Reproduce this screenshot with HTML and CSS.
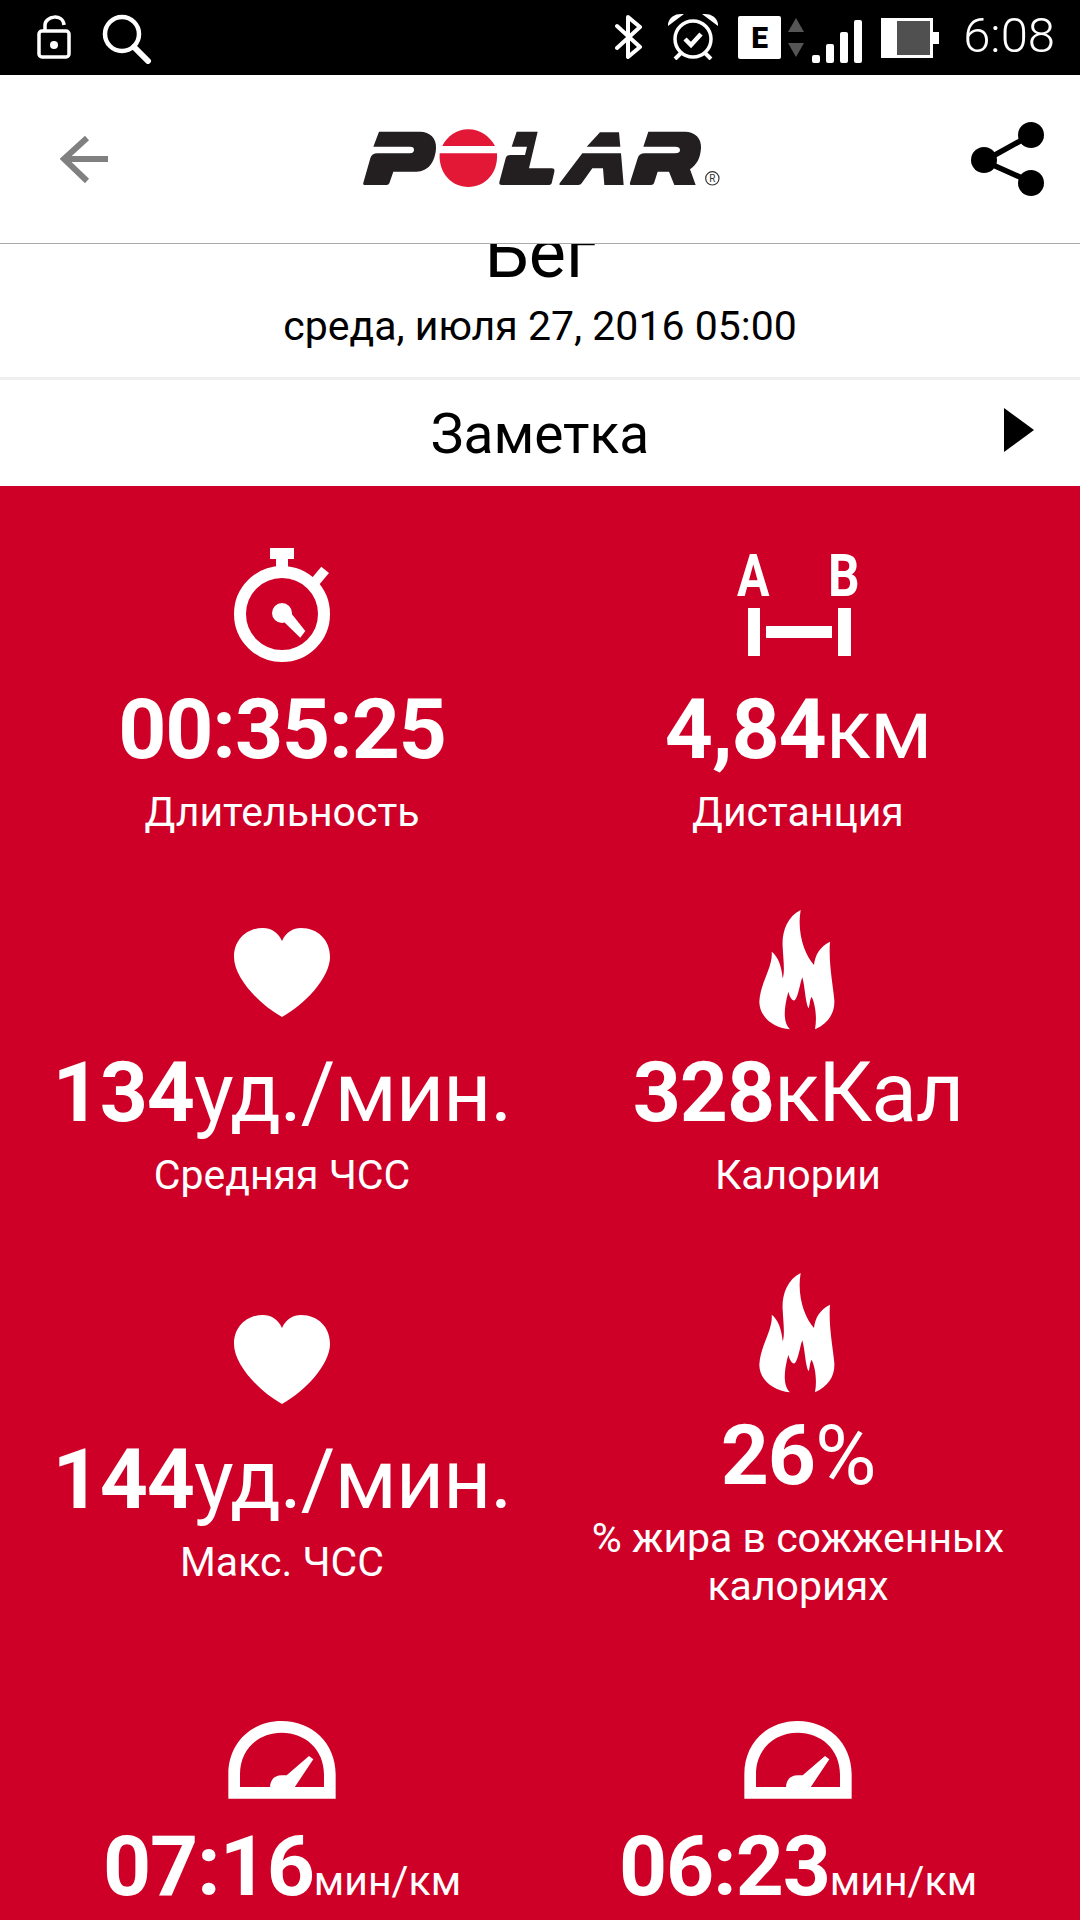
FILE: index.html
```html
<!DOCTYPE html>
<html lang="ru">
<head>
    <meta charset="UTF-8">
    <meta name="viewport" content="width=device-width, initial-scale=1.0">
    <title>Polar</title>
    <link rel="stylesheet" href="styles.css">
</head>
<body>
    <svg class="defs" width="0" height="0">
        <symbol id="heart" viewBox="0 0 120 120" overflow="visible">
            <path fill="#fff" d="M60,33C56,24 49,20 41,20C24,20 12,32 12,49C12,70 38,97 60,109C82,97 108,70 108,49C108,32 96,20 79,20C71,20 64,24 60,33Z"/>
        </symbol>
        <symbol id="flame" viewBox="0 0 120 120" overflow="visible">
            <g transform="translate(2,-8) scale(.3333)">
                <path fill="#fff" d="M182,30C140,50 125,100 128,140C130,180 135,215 128,235C125,200 115,170 95,155C100,200 60,250 58,305C58,350 100,385 150,388C130,370 130,330 145,275C150,295 160,305 165,300C175,290 180,250 187,232C195,260 195,300 205,325C210,320 208,300 215,290C225,310 232,350 225,388C265,370 285,340 283,300C280,260 265,190 270,125C240,140 225,165 222,195C195,165 170,100 182,30Z"/>
            </g>
        </symbol>
        <symbol id="gauge" viewBox="0 0 120 120" overflow="visible">
            <g transform="translate(3,29) scale(.3333)" fill="#fff">
                <path fill-rule="evenodd" d="M10,263V190C10,95 80,30 170,30C260,30 332,95 332,190V263ZM45,228H297V190C297,115 240,65 170,65C100,65 45,115 45,190Z"/>
                <path d="M135,230C135,205 150,193 170,193L185,193L252,135L265,145L208,230Z"/>
            </g>
        </symbol>
    </svg>

    <div class="statusbar">
        <svg class="ic-lock" width="34" height="46" viewBox="0 0 34 46">
            <rect x="2" y="17" width="30" height="26" rx="3" fill="none" stroke="#fff" stroke-width="3.5"/>
            <path d="M8,17V11C8,2 26,-1 27,11" fill="none" stroke="#fff" stroke-width="3.5"/>
            <circle cx="17" cy="31" r="4" fill="#fff"/>
        </svg>
        <svg class="ic-search" width="50" height="50" viewBox="0 0 50 50">
            <circle cx="20" cy="20" r="17" fill="none" stroke="#fff" stroke-width="4.5"/>
            <path d="M32,33L46,47" stroke="#fff" stroke-width="6" stroke-linecap="round"/>
        </svg>
        <div class="spacer"></div>
        <svg class="ic-bt" width="28" height="46" viewBox="0 0 28 46">
            <path d="M2,12L25,33L13,43V3L25,13L2,34" fill="none" stroke="#fff" stroke-width="4" stroke-linejoin="round" stroke-linecap="round"/>
        </svg>
        <svg class="ic-alarm" width="50" height="46" viewBox="0 0 50 46">
            <circle cx="25" cy="25" r="18" fill="none" stroke="#fff" stroke-width="3.5"/>
            <path d="M1,10C2,4 7,1 13,1Z M49,10C48,4 43,1 37,1Z" fill="#fff" stroke="#fff" stroke-width="2"/>
            <path d="M13,39L7,45M37,39L43,45" stroke="#fff" stroke-width="4"/>
            <path d="M17,25L23,31L33,20" fill="none" stroke="#fff" stroke-width="4.5"/>
        </svg>
        <div class="netbox">E</div>
        <svg class="ic-updown" width="16" height="40" viewBox="0 0 16 40">
            <path d="M8,0L16,14H0Z M0,25H16L8,39Z" fill="#555"/>
        </svg>
        <div class="signal">
            <span class="sig1"></span>
            <span class="sig2"></span>
            <span class="sig3"></span>
            <span class="sig4"></span>
        </div>
        <div class="battery"><div class="battery-fill"></div></div>
        <div class="clock">6:08</div>
    </div>

    <div class="topbar">
        <svg class="back" width="48" height="48" viewBox="0 0 48 48">
            <path d="M27,3L4,24L27,46M4,24H48" fill="none" stroke="#808080" stroke-width="6"/>
        </svg>
        <svg class="logo" width="375" height="75" viewBox="0 0 1125 225">
            <path fill="#231f20" d="M72,35H195C225,35 245,55 243,85C241,125 220,155 185,155H115L103,190Q101,195 95,195H30Q23,195 25,188L46,115Q50,100 68,100H165Q176,100 177,90Q178,80 165,80H55Z"/>
            <path fill="#e31837" d="M262,78C275,50 305,28 340,28C375,28 405,50 420,78Z"/>
            <path fill="#e31837" d="M254,100H426C430,160 390,201 340,201C290,201 250,160 254,100Z"/>
            <path fill="#231f20" d="M485,35H548L522,145H590Q600,145 598,155L590,190Q589,195 582,195H440Q431,195 433,187L452,115Q455,105 465,105H510L516,80H470Z"/>
            <path fill="#231f20" d="M695,80L735,37H792L796,80Z"/>
            <path fill="#231f20" d="M682,100H798L806,195H748L744,145H712L680,190Q677,195 670,195H618Q610,195 615,188Z"/>
            <path fill="#231f20" d="M880,35H990C1020,35 1040,55 1038,85C1036,115 1025,135 1005,148L1022,195H958L942,155H908L897,190Q895,195 888,195H830Q823,195 825,188L848,115Q852,100 870,100H960Q975,100 975,90Q975,80 960,80H865Z"/>
            <circle cx="1072" cy="175" r="20" fill="none" stroke="#333" stroke-width="3.5"/>
            <text x="1072" y="186" class="reg">R</text>
        </svg>
        <svg class="share" width="74" height="74" viewBox="0 0 74 74">
            <path d="M60,13L13,39L60,60" fill="none" stroke="#000" stroke-width="5.5"/>
            <circle cx="60" cy="13" r="13" fill="#000"/>
            <circle cx="13" cy="38" r="13" fill="#000"/>
            <circle cx="60" cy="61" r="13" fill="#000"/>
        </svg>
    </div>

    <div class="summary">
        <div class="title">Бег</div>
        <div class="date">среда, июля 27, 2016 05:00</div>
    </div>

    <div class="note">
        <div></div>
        <div class="note-text">Заметка</div>
        <div class="note-arrow"></div>
    </div>

    <div class="stats">
        <div class="cell">
            <svg class="icon" viewBox="0 0 120 120">
                <circle cx="60" cy="69" r="42" fill="none" stroke="#fff" stroke-width="12"/>
                <rect x="48" y="3" width="24" height="11" fill="#fff"/>
                <rect x="54" y="14" width="12" height="10" fill="#fff"/>
                <rect x="93" y="23" width="10" height="16" fill="#fff" transform="rotate(40 98 31)"/>
                <circle cx="60" cy="68" r="10" fill="#fff"/>
                <path d="M60,75L69,68L83.3,86L78.3,92.7Z" fill="#fff"/>
            </svg>
            <div class="value"><b>00:35:25</b></div>
            <div class="label">Длительность</div>
        </div>
        <div class="cell">
            <svg class="icon" viewBox="0 0 120 120">
                <text class="ab" transform="translate(-1,51) scale(.82,1)" x="0" y="0">A</text>
                <text class="ab" transform="translate(90,51) scale(.84,1)" x="0" y="0">B</text>
                <rect x="10" y="63" width="12" height="48" fill="#fff"/>
                <rect x="100" y="63" width="13" height="48" fill="#fff"/>
                <rect x="28" y="81" width="66" height="12" fill="#fff"/>
            </svg>
            <div class="value"><b>4,84</b>км</div>
            <div class="label">Дистанция</div>
        </div>
        <div class="cell">
            <svg class="icon"><use href="#heart"/></svg>
            <div class="value"><b>134</b>уд./мин.</div>
            <div class="label">Средняя ЧСС</div>
        </div>
        <div class="cell">
            <svg class="icon"><use href="#flame"/></svg>
            <div class="value"><b>328</b>кКал</div>
            <div class="label">Калории</div>
        </div>
        <div class="cell">
            <svg class="icon"><use href="#heart"/></svg>
            <div class="value"><b>144</b>уд./мин.</div>
            <div class="label">Макс. ЧСС</div>
        </div>
        <div class="cell">
            <svg class="icon"><use href="#flame"/></svg>
            <div class="value"><b>26</b>%</div>
            <div class="label">% жира в сожженных<br>калориях</div>
        </div>
        <div class="cell">
            <svg class="icon"><use href="#gauge"/></svg>
            <div class="value"><b>07:16</b><small>мин/км</small></div>
        </div>
        <div class="cell">
            <svg class="icon"><use href="#gauge"/></svg>
            <div class="value"><b>06:23</b><small>мин/км</small></div>
        </div>
    </div>
</body>
</html>
```

FILE: styles.css
```css
html, body{
    margin:0;
    height:1920px;
    overflow:hidden;
}
body{
    width:1080px;
    background:#ce0027;
    font-family:Roboto, "Noto Sans", sans-serif;
}
.defs{
    display:block;
    height:0;
}

/* status bar */
.statusbar{
    height:75px;
    background:#000;
    display:flex;
    align-items:flex-start;
    padding:0 25px 0 37px;
    box-sizing:border-box;
}
.statusbar svg{
    flex:none;
}
.spacer{
    flex:1;
}
.ic-lock{
    margin-top:14px;
}
.ic-search{
    margin:14px 0 0 31px;
}
.ic-bt{
    margin-top:14px;
}
.ic-alarm{
    margin:14px 0 0 25px;
}
.netbox{
    width:43px;
    height:43px;
    margin:16px 0 0 20px;
    background:#fff;
    border-radius:2px;
    color:#000;
    font-size:30px;
    font-weight:900;
    line-height:43px;
    text-align:center;
}
.ic-updown{
    margin:18px 0 0 7px;
}
.signal{
    display:flex;
    align-items:flex-end;
    gap:6px;
    height:43px;
    margin:20px 0 0 8px;
}
.signal span{
    width:8px;
    background:#fff;
    border-radius:2px;
}
.sig1{
    height:8px;
}
.sig2{
    height:19px;
}
.sig3{
    height:31px;
}
.sig4{
    height:43px;
}
.battery{
    position:relative;
    width:52px;
    height:40px;
    margin:18px 0 0 19px;
    background:#fff;
}
.battery:after{
    content:"";
    position:absolute;
    left:52px;
    top:14px;
    width:6px;
    height:12px;
    background:#fff;
}
.battery-fill{
    position:absolute;
    left:16px;
    top:3px;
    width:33px;
    height:34px;
    background:#505050;
}
.clock{
    margin:9px 0 0 30px;
    color:#fff;
    font-size:49px;
    font-weight:300;
    line-height:54px;
}

/* top bar */
.topbar{
    height:168px;
    background:#fff;
    border-bottom:1px solid #aaa;
    display:flex;
    align-items:flex-start;
    padding-left:60px;
}
.back{
    margin-top:60px;
}
.logo{
    margin:45px 0 0 247px;
}
.reg{
    font-size:30px;
    text-anchor:middle;
    fill:#333;
}
.share{
    margin:47px 0 0 241px;
}

/* title */
.summary{
    height:133px;
    overflow:hidden;
    background:#fff;
    text-align:center;
    color:#000;
}
.title{
    margin-top:-26px;
    font-size:70px;
    line-height:70px;
}
.date{
    margin-top:14px;
    font-size:41px;
    line-height:48px;
}
.note{
    height:106px;
    border-top:3px solid #efefef;
    background:#fff;
    display:grid;
    grid-template-columns:1fr auto 1fr;
    align-items:center;
    color:#000;
}
.note-text{
    padding-top:2px;
    font-size:55px;
}
.note-arrow{
    justify-self:end;
    margin:-6px 46px 0 0;
    border-left:30px solid #000;
    border-top:22px solid transparent;
    border-bottom:22px solid transparent;
}

/* red part */
.stats{
    display:grid;
    grid-template-columns:1fr 1fr;
    row-gap:72px;
    padding:59px 24px 0;
    color:#fff;
}
.cell{
    display:flex;
    flex-direction:column;
    align-items:center;
    justify-content:center;
    text-align:center;
}
.icon{
    display:block;
    width:120px;
    height:120px;
    overflow:visible;
}
.ab{
    font-size:59px;
    font-weight:700;
    fill:#fff;
}
.value{
    margin-top:23px;
    font-size:84px;
    line-height:84px;
    letter-spacing:-1.1px;
    white-space:nowrap;
}
.value b{
    font-weight:700;
}
.value small{
    font-size:41px;
    letter-spacing:0;
}
.label{
    margin-top:16px;
    font-size:41px;
    line-height:48px;
}
```
